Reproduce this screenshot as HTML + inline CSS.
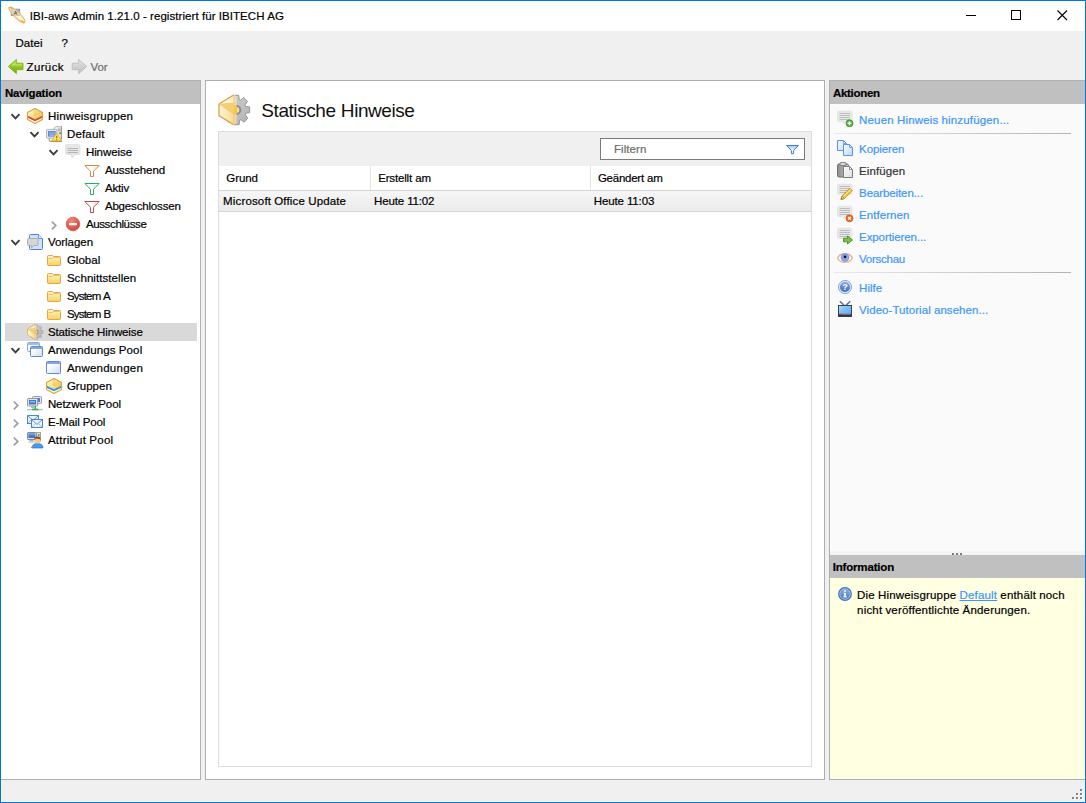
<!DOCTYPE html>
<html lang="de">
<head>
<meta charset="utf-8">
<title>IBI-aws Admin 1.21.0 - registriert für IBITECH AG</title>
<style>
*{box-sizing:border-box;margin:0;padding:0}
html,body{width:1086px;height:803px;overflow:hidden;background:#f0f0f0}
body{font-family:"Liberation Sans",sans-serif;font-size:12px;color:#000;position:relative}
.abs{position:absolute}
.b{position:absolute}
.t{position:absolute;white-space:nowrap;line-height:18px;height:18px;-webkit-text-stroke:.2px currentColor}
svg{overflow:visible}
</style>
</head>
<body>
<!-- window frame -->
<div class="b" style="left:0;top:0;width:1086px;height:803px;border:1px solid #0078d7"></div>
<div class="b" style="left:1px;top:31px;width:1084px;height:771px;border:1px solid #fcf6f0;border-top:none"></div>
<!-- title bar -->
<div class="b" style="left:1px;top:1px;width:1084px;height:30px;background:#fff"></div>
<svg class="abs" style="left:8px;top:7px" width="17" height="17" viewBox="0 0 17 17"><rect x="3.300" y="2.200" width="8.400" height="6.300" fill="#94b4d8" stroke="#8198b6" stroke-width=".9"/>
<ellipse cx="9" cy="7.900" rx="10.800" ry="2.900" transform="rotate(44 9 7.900)" fill="#fff4dc" fill-opacity=".5" stroke="#f0bb62" stroke-width="1.100"/>
<ellipse cx="9" cy="7.900" rx="9.600" ry="1.900" transform="rotate(44 9 7.900)" fill="none" stroke="#f6d8a0" stroke-width=".6"/>
<path d="M6.200 7.600 L7.600 4.100 L9 7.600 M6.800 6.400 H8.400" stroke="#8f7220" stroke-width="1" fill="none"/>
<path d="M1.300 .9 Q2.800 .1 4.300 1.300" stroke="#eeb04a" stroke-width="1.500" fill="none" stroke-linecap="round"/>
<path d="M13.500 13.700 Q15.200 15.600 16.400 15.400" stroke="#eeb04a" stroke-width="1.500" fill="none" stroke-linecap="round"/></svg>
<svg class="abs" style="left:948px;top:1px" width="137" height="30" viewBox="948 1 137 30">
  <path d="M966 15.500h10" stroke="#000" stroke-width="1" fill="none"/>
  <rect x="1011.500" y="10.500" width="9" height="9" stroke="#000" stroke-width="1" fill="none"/>
  <path d="M1057.500 10.500l9.500 9.500M1067 10.500l-9.500 9.500" stroke="#000" stroke-width="1.100" fill="none"/>
</svg>
<!-- toolbar icons -->
<svg class="abs" style="left:8px;top:59px" width="16" height="16" viewBox="0 0 16 16"><defs><linearGradient id="gbk" x1="0" y1="0" x2="0" y2="1"><stop offset="0" stop-color="#bfe23a"/><stop offset=".5" stop-color="#93c81e"/><stop offset="1" stop-color="#6aaa12"/></linearGradient></defs>
<path d="M.4 7.500 L8.400 .4 V4.200 H15 V10.700 H8.400 V14.700Z" fill="url(#gbk)" stroke="#7fb61e" stroke-width=".9" stroke-linejoin="round"/>
<path d="M2.300 7.300 L7.500 2.700 V5.200 H14 V6.500 H3.500Z" fill="#dff08a" opacity=".55"/></svg>
<svg class="abs" style="left:72px;top:59px" width="16" height="16" viewBox="0 0 16 16"><defs><linearGradient id="gfw" x1="0" y1="0" x2="0" y2="1"><stop offset="0" stop-color="#e6e6e6"/><stop offset="1" stop-color="#bdbdbd"/></linearGradient></defs>
<path d="M14.700 7.500 L6.700 .4 V4.200 H.2 V10.700 H6.700 V14.700Z" fill="url(#gfw)" stroke="#bcbcbc" stroke-width=".9" stroke-linejoin="round"/></svg>

<!-- navigation panel -->
<div class="b" style="left:1px;top:80px;width:200px;height:700px;background:#fff;border-right:1px solid #b0b0b0;border-bottom:1px solid #b0b0b0;border-top:1px solid #b0b0b0"></div>
<div class="b" style="left:1px;top:81px;width:199px;height:23px;background:#c0c0c0"></div>
<div class="b" style="left:5px;top:323px;width:192px;height:18px;background:#d9d9d9"></div>
<svg class="abs" style="left:10px;top:112px" width="12" height="9" viewBox="0 0 12 9"><path d="M1.5 2.200 L5.500 6.300 L9.500 2.200" fill="none" stroke="#3c3c3c" stroke-width="1.900"/></svg>
<svg class="abs" style="left:27px;top:108px" width="16" height="16" viewBox="0 0 16 16"><defs><linearGradient id="cte2574a" x1="0" y1="0" x2="1" y2=".6"><stop offset="0" stop-color="#fffef4"/><stop offset=".5" stop-color="#fbe7a4"/><stop offset="1" stop-color="#f3bd40"/></linearGradient>
<linearGradient id="cse2574a" x1="0" y1="0" x2="1" y2="0"><stop offset="0" stop-color="#fdf3c8"/><stop offset=".5" stop-color="#f8dc6a"/><stop offset="1" stop-color="#f4c84a"/></linearGradient></defs>
<path d="M8 .5 L15.500 4.500 V11.500 L8 15.500 L.5 11.500 V4.500Z" fill="#fdf7d2"/>
<path d="M8 .5 L15.500 4.500 L8 8.500 L.5 4.500Z" fill="url(#cte2574a)"/>
<path d="M.5 4.500 L8 8.500 L15.500 4.500 V7.600 L8 11 L.5 7.600Z" fill="url(#cse2574a)"/>
<path d="M.5 7.600 L8 11 L15.500 7.600 V9.600 L8 13 L.5 9.600Z" fill="#e2574a"/>
<path d="M.5 8.800 L8 12.200 L15.500 8.800 V9.600 L8 13 L.5 9.600Z" fill="#c53d33"/>
<path d="M8 .5 L15.500 4.500 V11.500 L8 15.500 L.5 11.500 V4.500Z" fill="none" stroke="#d9a538" stroke-width="1.100" stroke-linejoin="round"/>
<path d="M8 1 V8" stroke="#e0ab48" stroke-width=".7" fill="none" opacity=".8"/></svg>
<svg class="abs" style="left:29px;top:130px" width="12" height="9" viewBox="0 0 12 9"><path d="M1.5 2.200 L5.500 6.300 L9.500 2.200" fill="none" stroke="#3c3c3c" stroke-width="1.900"/></svg>
<svg class="abs" style="left:46px;top:126px" width="16" height="16" viewBox="0 0 16 16"><path d="M9.500 .6 H15.400 V13.200 H8 V2Z" fill="#ececec" stroke="#b4b4b4" stroke-width=".9"/>
<path d="M15.400 .6 V13.200 H11" fill="none" stroke="#8e8e8e" stroke-width=".9"/>
<rect x="11.800" y="2.700" width="2.400" height=".9" fill="#8c8c8c"/><rect x="11.800" y="4.400" width="2.400" height=".9" fill="#8c8c8c"/><circle cx="14" cy="7.300" r="1" fill="#3fa43a"/>
<rect x=".5" y="3.400" width="10.300" height="8.800" rx="1" fill="#e6e8ea" stroke="#a9adb2" stroke-width=".9"/>
<rect x="2" y="5" width="7.600" height="5.600" fill="#5585d2"/><rect x="2.800" y="5.800" width="6" height="3.600" fill="#7fa5e2"/><rect x="3.800" y="9" width="4" height=".8" fill="#a9c2ec"/>
<path d="M3.300 12.600 V14.500 Q3.300 15.300 4.500 15.300 H6" fill="none" stroke="#9aa0a6" stroke-width="1.200"/>
<path d="M10.700 6.900 L15.700 15.200 H5.500Z" fill="#fde468" stroke="#e6b23a" stroke-width=".9" stroke-linejoin="round"/>
<path d="M5.300 15.300 H15.900" stroke="#c8861e" stroke-width="1.100"/>
<rect x="10.200" y="9.800" width="1.100" height="2.600" fill="#a8660a"/><rect x="10.200" y="13.200" width="1.100" height="1.100" fill="#a8660a"/></svg>
<svg class="abs" style="left:48px;top:148px" width="12" height="9" viewBox="0 0 12 9"><path d="M1.5 2.200 L5.500 6.300 L9.500 2.200" fill="none" stroke="#3c3c3c" stroke-width="1.900"/></svg>
<svg class="abs" style="left:65px;top:144px" width="16" height="16" viewBox="0 0 16 16"><path d="M2 .5 H13.500 Q15 .5 15 2 V9 Q15 10.500 13.500 10.500 H10 L7.200 13.800 L6 10.500 H2 Q.5 10.500 .5 9 V2 Q.5 .5 2 .5Z" fill="#e7e7e7" stroke="#dcdcdc" stroke-width=".8"/>
<path d="M2.500 4.500 H13 M2.500 6.500 H13 M2.500 8.500 H13" stroke="#b4b4b4" stroke-width="1"/></svg>
<svg class="abs" style="left:84px;top:162px" width="16" height="16" viewBox="0 0 16 16"><path d="M.8 3.500 H15.200 L9.500 9.200 V14.500 H6.500 V9.200Z" fill="#fff" stroke="#cf8a45" stroke-width="1" stroke-linejoin="miter"/><path d="M10 5 L12.500 4.500 L9.500 7.500Z" fill="#cf8a45" opacity=".25"/></svg>
<svg class="abs" style="left:84px;top:180px" width="16" height="16" viewBox="0 0 16 16"><path d="M.8 3.500 H15.200 L9.500 9.200 V14.500 H6.500 V9.200Z" fill="#fff" stroke="#2fa869" stroke-width="1" stroke-linejoin="miter"/><path d="M10 5 L12.500 4.500 L9.500 7.500Z" fill="#2fa869" opacity=".25"/></svg>
<svg class="abs" style="left:84px;top:198px" width="16" height="16" viewBox="0 0 16 16"><path d="M.8 3.500 H15.200 L9.500 9.200 V14.500 H6.500 V9.200Z" fill="#fff" stroke="#c44848" stroke-width="1" stroke-linejoin="miter"/><path d="M10 5 L12.500 4.500 L9.500 7.500Z" fill="#c44848" opacity=".25"/></svg>
<svg class="abs" style="left:50px;top:219px" width="8" height="12" viewBox="0 0 8 12"><path d="M1.800 2.600 L5.800 6.450 L1.800 10.300" fill="none" stroke="#a0a0a0" stroke-width="1.700"/></svg>
<svg class="abs" style="left:65px;top:216px" width="16" height="16" viewBox="0 0 16 16"><defs><radialGradient id="gstop" cx=".4" cy=".3" r=".8"><stop offset="0" stop-color="#f28a7c"/><stop offset="1" stop-color="#cf3b30"/></radialGradient></defs>
<circle cx="8" cy="8" r="6.800" fill="url(#gstop)" stroke="#d9564a" stroke-width=".8"/><rect x="4" y="7" width="8" height="2.200" rx=".5" fill="#fff"/></svg>
<svg class="abs" style="left:10px;top:238px" width="12" height="9" viewBox="0 0 12 9"><path d="M1.5 2.200 L5.500 6.300 L9.500 2.200" fill="none" stroke="#3c3c3c" stroke-width="1.900"/></svg>
<svg class="abs" style="left:27px;top:234px" width="16" height="16" viewBox="0 0 16 16"><path d="M3.500 .5 H11.500 L15.500 4.500 V14.500 Q15.500 15.500 14.500 15.500 H3.500 Q2.500 15.500 2.500 14.500 V1.500 Q2.500 .5 3.500 .5Z" fill="#cfe0f8" stroke="#4a86e0"/>
<path d="M11.500 .5 V4.500 H15.500" fill="#eaf2fd" stroke="#4a86e0" stroke-width=".8"/>
<path d="M1.500 4.500 H10 Q11 4.500 11 5.500 V10.500 Q11 11.500 10 11.500 H6.500 L4.500 14 V11.500 H1.500 Q.5 11.500 .5 10.500 V5.500 Q.5 4.500 1.500 4.500Z" fill="#d6d6d6" stroke="#a9a9a9" stroke-width=".9"/></svg>
<svg class="abs" style="left:46px;top:252px" width="16" height="16" viewBox="0 0 16 16"><defs><linearGradient id="gfo" x1="0" y1="0" x2="0" y2="1"><stop offset="0" stop-color="#fef6cc"/><stop offset="1" stop-color="#f6d256"/></linearGradient></defs>
<path d="M1.500 4.500 Q1.500 3.500 2.500 3.500 H6.500 L7.500 4.500 H13.500 Q14.500 4.500 14.500 5.500 V12.500 Q14.500 13.500 13.500 13.500 H2.500 Q1.500 13.500 1.500 12.500Z" fill="url(#gfo)" stroke="#e0a648"/>
<path d="M2.500 6.500 H6.500 L7.500 5.500 H13.500" fill="none" stroke="#ecbc5c" stroke-width=".9"/></svg>
<svg class="abs" style="left:46px;top:270px" width="16" height="16" viewBox="0 0 16 16"><defs><linearGradient id="gfo" x1="0" y1="0" x2="0" y2="1"><stop offset="0" stop-color="#fef6cc"/><stop offset="1" stop-color="#f6d256"/></linearGradient></defs>
<path d="M1.500 4.500 Q1.500 3.500 2.500 3.500 H6.500 L7.500 4.500 H13.500 Q14.500 4.500 14.500 5.500 V12.500 Q14.500 13.500 13.500 13.500 H2.500 Q1.500 13.500 1.500 12.500Z" fill="url(#gfo)" stroke="#e0a648"/>
<path d="M2.500 6.500 H6.500 L7.500 5.500 H13.500" fill="none" stroke="#ecbc5c" stroke-width=".9"/></svg>
<svg class="abs" style="left:46px;top:288px" width="16" height="16" viewBox="0 0 16 16"><defs><linearGradient id="gfo" x1="0" y1="0" x2="0" y2="1"><stop offset="0" stop-color="#fef6cc"/><stop offset="1" stop-color="#f6d256"/></linearGradient></defs>
<path d="M1.500 4.500 Q1.500 3.500 2.500 3.500 H6.500 L7.500 4.500 H13.500 Q14.500 4.500 14.500 5.500 V12.500 Q14.500 13.500 13.500 13.500 H2.500 Q1.500 13.500 1.500 12.500Z" fill="url(#gfo)" stroke="#e0a648"/>
<path d="M2.500 6.500 H6.500 L7.500 5.500 H13.500" fill="none" stroke="#ecbc5c" stroke-width=".9"/></svg>
<svg class="abs" style="left:46px;top:306px" width="16" height="16" viewBox="0 0 16 16"><defs><linearGradient id="gfo" x1="0" y1="0" x2="0" y2="1"><stop offset="0" stop-color="#fef6cc"/><stop offset="1" stop-color="#f6d256"/></linearGradient></defs>
<path d="M1.500 4.500 Q1.500 3.500 2.500 3.500 H6.500 L7.500 4.500 H13.500 Q14.500 4.500 14.500 5.500 V12.500 Q14.500 13.500 13.500 13.500 H2.500 Q1.500 13.500 1.500 12.500Z" fill="url(#gfo)" stroke="#e0a648"/>
<path d="M2.500 6.500 H6.500 L7.500 5.500 H13.500" fill="none" stroke="#ecbc5c" stroke-width=".9"/></svg>
<svg class="abs" style="left:27px;top:324px" width="16" height="16" viewBox="0 0 16 16"><g transform="scale(.5)"><defs><linearGradient id="gsl2" x1="0" y1="0" x2="1" y2="0"><stop offset="0" stop-color="#fff6dc"/><stop offset="1" stop-color="#f8d88e"/></linearGradient>
<linearGradient id="gst2" x1="0" y1="1" x2="1" y2="0"><stop offset="0" stop-color="#fffef6"/><stop offset="1" stop-color="#f9e6b4"/></linearGradient>
<linearGradient id="ggr2" x1="0" y1="0" x2="1" y2="1"><stop offset="0" stop-color="#d2d2d2"/><stop offset="1" stop-color="#b2b2b2"/></linearGradient></defs>
<path d="M27.76 12.42 L31.60 12.89 L31.69 18.60 L27.86 19.22 L27.29 20.82 L29.71 24.15 L26.10 28.25 L22.99 25.71 L21.56 26.40 L21.13 30.63 L15.94 30.73 L15.38 26.52 L13.92 25.89 L10.89 28.55 L7.16 24.58 L9.47 21.16 L8.84 19.58 L5.00 19.11 L4.91 13.40 L8.74 12.78 L9.31 11.18 L6.89 7.85 L10.50 3.75 L13.61 6.29 L15.04 5.60 L15.47 1.37 L20.66 1.27 L21.22 5.48 L22.68 6.11 L25.71 3.45 L29.44 7.42 L27.13 10.84Z" fill="url(#ggr2)" stroke="#8e8e8e" stroke-width=".9" stroke-linejoin="round"/>
<circle cx="18.300" cy="16" r="5" fill="#8c8c8c"/><circle cx="18.300" cy="16" r="3" fill="#f1e2b0"/>
<path d="M16 .75 L18.600 2.500 V29.500 L16 31Z" fill="#fbe7b4" opacity=".7"/>
<path d="M16 12.500 H18.500 Q20.300 16 18.500 20 H16Z" fill="#fdc733"/>
<path d="M1 10 L16 .75 V9.200Z" fill="url(#gst2)"/>
<path d="M1 10 L16 9.200 V20Z" fill="#f5cf72"/>
<path d="M1 10 L16 20 V31 L1 21.700Z" fill="url(#gsl2)"/>
<path d="M16 .75 L1 10 V21.700 L16 31" fill="none" stroke="#dca548" stroke-width="1.400" stroke-linejoin="round"/>
<path d="M1 10 L16 9.200 M1 10 L16 20" stroke="#f2c466" stroke-width=".7" fill="none"/>
<path d="M16 .75 V31" stroke="#f4c66a" stroke-width="1"/></g></svg>
<svg class="abs" style="left:10px;top:346px" width="12" height="9" viewBox="0 0 12 9"><path d="M1.5 2.200 L5.500 6.300 L9.500 2.200" fill="none" stroke="#3c3c3c" stroke-width="1.900"/></svg>
<svg class="abs" style="left:27px;top:342px" width="16" height="16" viewBox="0 0 16 16"><g opacity=".75"><defs><linearGradient id="gwb" x1="0" y1="0" x2="1" y2="1"><stop offset=".25" stop-color="#ffffff"/><stop offset="1" stop-color="#cfdcf4"/></linearGradient></defs>
<rect x="0.5" y="0.5" width="12" height="9" rx="1" fill="url(#gwb)" stroke="#6288d0"/>
<rect x="1" y="1" width="11" height="2" fill="#86a8e2"/></g><defs><linearGradient id="gwc" x1="0" y1="0" x2="1" y2="1"><stop offset=".25" stop-color="#ffffff"/><stop offset="1" stop-color="#cfdcf4"/></linearGradient></defs>
<rect x="3.5" y="4.5" width="12" height="10" rx="1" fill="url(#gwc)" stroke="#6288d0"/>
<rect x="4" y="5" width="11" height="2" fill="#86a8e2"/></svg>
<svg class="abs" style="left:46px;top:360px" width="16" height="16" viewBox="0 0 16 16"><defs><linearGradient id="gwa" x1="0" y1="0" x2="1" y2="1"><stop offset=".25" stop-color="#ffffff"/><stop offset="1" stop-color="#cfdcf4"/></linearGradient></defs>
<rect x="0.5" y="1.5" width="14" height="12" rx="1" fill="url(#gwa)" stroke="#6288d0"/>
<rect x="1" y="2" width="13" height="2" fill="#86a8e2"/></svg>
<svg class="abs" style="left:46px;top:378px" width="16" height="16" viewBox="0 0 16 16"><defs><linearGradient id="ct4aa0e6" x1="0" y1="0" x2="1" y2=".6"><stop offset="0" stop-color="#fffef4"/><stop offset=".5" stop-color="#fbe7a4"/><stop offset="1" stop-color="#f3bd40"/></linearGradient>
<linearGradient id="cs4aa0e6" x1="0" y1="0" x2="1" y2="0"><stop offset="0" stop-color="#fdf3c8"/><stop offset=".5" stop-color="#f8dc6a"/><stop offset="1" stop-color="#f4c84a"/></linearGradient></defs>
<path d="M8 .5 L15.500 4.500 V11.500 L8 15.500 L.5 11.500 V4.500Z" fill="#fdf7d2"/>
<path d="M8 .5 L15.500 4.500 L8 8.500 L.5 4.500Z" fill="url(#ct4aa0e6)"/>
<path d="M.5 4.500 L8 8.500 L15.500 4.500 V7.600 L8 11 L.5 7.600Z" fill="url(#cs4aa0e6)"/>
<path d="M.5 7.600 L8 11 L15.500 7.600 V9.600 L8 13 L.5 9.600Z" fill="#4aa0e6"/>
<path d="M.5 8.800 L8 12.200 L15.500 8.800 V9.600 L8 13 L.5 9.600Z" fill="#2f7fc8"/>
<path d="M8 .5 L15.500 4.500 V11.500 L8 15.500 L.5 11.500 V4.500Z" fill="none" stroke="#d9a538" stroke-width="1.100" stroke-linejoin="round"/>
<path d="M8 1 V8" stroke="#e0ab48" stroke-width=".7" fill="none" opacity=".8"/></svg>
<svg class="abs" style="left:12px;top:399px" width="8" height="12" viewBox="0 0 8 12"><path d="M1.800 2.600 L5.800 6.450 L1.800 10.300" fill="none" stroke="#a0a0a0" stroke-width="1.700"/></svg>
<svg class="abs" style="left:27px;top:396px" width="16" height="16" viewBox="0 0 16 16"><rect x="5.500" y=".5" width="9" height="7" rx=".8" fill="#e3e6ea" stroke="#9aa1a8"/><rect x="7" y="2" width="6" height="4" fill="#4a7fd0"/>
<rect x=".5" y="2.500" width="10" height="7.500" rx=".8" fill="#e3e6ea" stroke="#8f979f"/><rect x="2" y="4" width="7" height="4.500" fill="#3f78cf"/><rect x="3" y="5" width="5" height="1.500" fill="#8fb4ec"/>
<rect x="4" y="10.500" width="3" height="1.500" fill="#a9afb5"/>
<rect x="7.500" y="10" width="1.500" height="3" fill="#3fae6a"/><rect x="0" y="13" width="16" height="1.300" fill="#b9c2c8"/><rect x="5" y="12.600" width="6.500" height="1.700" fill="#3fae6a"/></svg>
<svg class="abs" style="left:12px;top:417px" width="8" height="12" viewBox="0 0 8 12"><path d="M1.800 2.600 L5.800 6.450 L1.800 10.300" fill="none" stroke="#a0a0a0" stroke-width="1.700"/></svg>
<svg class="abs" style="left:27px;top:414px" width="16" height="16" viewBox="0 0 16 16"><rect x="0.5" y="1.5" width="11" height="8" fill="#eef4fd" stroke="#4a86dc"/>
<path d="M1 2 L6.0 6.3999999999999995 L11 2" fill="none" stroke="#4a86dc" stroke-width=".9"/>
<path d="M1 9 L4.5600000000000005 5.5 M11 9 L7.4399999999999995 5.5" fill="none" stroke="#8fb4ec" stroke-width=".8"/><rect x="4.5" y="5.5" width="11" height="8" fill="#eef4fd" stroke="#4a86dc"/>
<path d="M5 6 L10.0 10.399999999999999 L15 6" fill="none" stroke="#4a86dc" stroke-width=".9"/>
<path d="M5 13 L8.56 9.5 M15 13 L11.44 9.5" fill="none" stroke="#8fb4ec" stroke-width=".8"/></svg>
<svg class="abs" style="left:12px;top:435px" width="8" height="12" viewBox="0 0 8 12"><path d="M1.800 2.600 L5.800 6.450 L1.800 10.300" fill="none" stroke="#a0a0a0" stroke-width="1.700"/></svg>
<svg class="abs" style="left:27px;top:432px" width="16" height="16" viewBox="0 0 16 16"><rect x="9.500" y=".5" width="4" height="9" fill="#e4e4e4" stroke="#a2a2a2"/><rect x="11" y="2" width="1.500" height="2.500" fill="#3fae4a"/>
<rect x=".5" y=".5" width="8.500" height="7" rx=".6" fill="#dfe3e8" stroke="#7f8a96"/><rect x="1.500" y="1.500" width="6.500" height="4.500" fill="#3d74c8"/><rect x="1.500" y="1.500" width="6.500" height="1.800" fill="#6e9be0"/>
<rect x="2.500" y="8" width="4" height="1.500" fill="#a8aeb4"/><rect x="1.500" y="9.500" width="6" height="1.200" fill="#c3c7cb"/>
<path d="M5 16 Q5 11.500 10.500 11.500 Q16 11.500 16 16Z" fill="#3f9cf0" stroke="#2a78d0" stroke-width=".7"/>
<circle cx="10.500" cy="8.300" r="3.300" fill="#f6c89a"/><path d="M7.100 8 Q7.300 4.600 10.500 4.600 Q13.700 4.600 13.900 8 Q12 6.500 10.500 6.800 Q9 6.500 7.100 8Z" fill="#9a4a1a"/>
<rect x="4" y="14.800" width="1.500" height="1.200" fill="#e08a2a"/></svg>

<!-- center panel -->
<div class="b" style="left:205px;top:80px;width:620px;height:700px;background:#fff;border:1px solid #adadad"></div>
<svg class="abs" style="left:218px;top:94px" width="32" height="32" viewBox="0 0 32 32"><defs><linearGradient id="gsl" x1="0" y1="0" x2="1" y2="0"><stop offset="0" stop-color="#fff6dc"/><stop offset="1" stop-color="#f8d88e"/></linearGradient>
<linearGradient id="gst" x1="0" y1="1" x2="1" y2="0"><stop offset="0" stop-color="#fffef6"/><stop offset="1" stop-color="#f9e6b4"/></linearGradient>
<linearGradient id="ggr" x1="0" y1="0" x2="1" y2="1"><stop offset="0" stop-color="#d2d2d2"/><stop offset="1" stop-color="#b2b2b2"/></linearGradient></defs>
<path d="M27.76 12.42 L31.60 12.89 L31.69 18.60 L27.86 19.22 L27.29 20.82 L29.71 24.15 L26.10 28.25 L22.99 25.71 L21.56 26.40 L21.13 30.63 L15.94 30.73 L15.38 26.52 L13.92 25.89 L10.89 28.55 L7.16 24.58 L9.47 21.16 L8.84 19.58 L5.00 19.11 L4.91 13.40 L8.74 12.78 L9.31 11.18 L6.89 7.85 L10.50 3.75 L13.61 6.29 L15.04 5.60 L15.47 1.37 L20.66 1.27 L21.22 5.48 L22.68 6.11 L25.71 3.45 L29.44 7.42 L27.13 10.84Z" fill="url(#ggr)" stroke="#8e8e8e" stroke-width=".9" stroke-linejoin="round"/>
<circle cx="18.300" cy="16" r="5" fill="#8c8c8c"/><circle cx="18.300" cy="16" r="3" fill="#f1e2b0"/>
<path d="M16 .75 L18.600 2.500 V29.500 L16 31Z" fill="#fbe7b4" opacity=".7"/>
<path d="M16 12.500 H18.500 Q20.300 16 18.500 20 H16Z" fill="#fdc733"/>
<path d="M1 10 L16 .75 V9.200Z" fill="url(#gst)"/>
<path d="M1 10 L16 9.200 V20Z" fill="#f5cf72"/>
<path d="M1 10 L16 20 V31 L1 21.700Z" fill="url(#gsl)"/>
<path d="M16 .75 L1 10 V21.700 L16 31" fill="none" stroke="#dca548" stroke-width="1.400" stroke-linejoin="round"/>
<path d="M1 10 L16 9.200 M1 10 L16 20" stroke="#f2c466" stroke-width=".7" fill="none"/>
<path d="M16 .75 V31" stroke="#f4c66a" stroke-width="1"/></svg>
<div class="b" style="left:218px;top:131px;width:594px;height:636px;border:1px solid #dddddd;background:#fff"></div>
<div class="b" style="left:219px;top:132px;width:592px;height:34px;background:#f0f0f0"></div>
<div class="b" style="left:600px;top:138px;width:205px;height:22px;background:#fff;border:1px solid #7a7a7a"></div>
<svg class="abs" style="left:786px;top:145px" width="13" height="10" viewBox="0 0 13 10"><defs><linearGradient id="gfb" x1="0" y1="0" x2="0" y2="1"><stop offset="0" stop-color="#9fc3f0"/><stop offset=".6" stop-color="#ffffff"/></linearGradient></defs>
<path d="M.5 .5 H12.500 L7.600 5.400 V8.700 H5.400 V5.400Z" fill="url(#gfb)" stroke="#3f7fd8" stroke-width="1" stroke-linejoin="round"/></svg>
<div class="b" style="left:370px;top:166px;width:1px;height:24px;background:#e4e4e4"></div>
<div class="b" style="left:590px;top:166px;width:1px;height:24px;background:#e4e4e4"></div>
<div class="b" style="left:219px;top:190px;width:592px;height:22px;background:linear-gradient(#f6f6f6,#ebebeb);border-top:1px solid #d4d4d4;border-bottom:1px solid #d4d4d4"></div>

<!-- right panel -->
<div class="b" style="left:829px;top:80px;width:256px;height:700px;background:#fafafa;border-left:1px solid #adadad;border-bottom:1px solid #adadad;border-top:1px solid #b0b0b0"></div>
<div class="b" style="left:830px;top:81px;width:255px;height:23px;background:#c0c0c0"></div>
<div class="b" style="left:834px;top:133px;width:237px;height:1px;background:linear-gradient(to right,#eaeaea,#b2b2b2)"></div>
<div class="b" style="left:834px;top:272px;width:237px;height:1px;background:linear-gradient(to right,#eaeaea,#b2b2b2)"></div>
<div class="b" style="left:830px;top:104px;width:1px;height:447px;background:#fff"></div>
<svg class="abs" style="left:837px;top:111px" width="16" height="16" viewBox="0 0 16 16"><path d="M2 .3 H13.500 Q15 .3 15 1.800 V9 Q15 10.500 13.500 10.500 H9 L6.500 13 V10.500 H2 Q.5 10.500 .5 9 V1.800 Q.5 .3 2 .3Z" fill="#e9e9e9" stroke="#dfdfdf" stroke-width=".8"/>
<path d="M2.500 2.500 H13 M2.500 4.500 H13 M2.500 6.500 H13 M2.500 8.500 H13" stroke="#b8b8b8" stroke-width=".9"/><circle cx="12.500" cy="12.300" r="3.500" fill="#4fae3a" stroke="#2f8a22" stroke-width=".7"/><path d="M10.500 12.300 H14.500 M12.500 10.300 V14.300" stroke="#fff" stroke-width="1.400"/></svg>
<svg class="abs" style="left:837px;top:140px" width="16" height="16" viewBox="0 0 16 16"><defs><linearGradient id="gp1" x1="0" y1="0" x2="1" y2="1"><stop offset="0" stop-color="#f2f7fe"/><stop offset="1" stop-color="#cfe0fa"/></linearGradient></defs>
<path d="M0.5 0.5 H6.5 L9.5 3.5 V10.5 H0.5Z" fill="url(#gp1)" stroke="#5a94e8" stroke-linejoin="round"/>
<path d="M6.5 0.5 V3.5 H9.5" fill="none" stroke="#5a94e8" stroke-width=".8"/><defs><linearGradient id="gp2" x1="0" y1="0" x2="1" y2="1"><stop offset="0" stop-color="#f6faff"/><stop offset="1" stop-color="#c2d8f8"/></linearGradient></defs>
<path d="M6.5 4.5 H12.5 L15.5 7.5 V15.5 H6.5Z" fill="url(#gp2)" stroke="#5a94e8" stroke-linejoin="round"/>
<path d="M12.5 4.5 V7.5 H15.5" fill="none" stroke="#5a94e8" stroke-width=".8"/></svg>
<svg class="abs" style="left:837px;top:162px" width="16" height="16" viewBox="0 0 16 16"><defs><linearGradient id="gcb" x1="0" y1="0" x2="1" y2="0"><stop offset="0" stop-color="#8c8c8c"/><stop offset="1" stop-color="#c9c9c9"/></linearGradient></defs>
<rect x=".5" y="2" width="11" height="13" rx="1.500" fill="url(#gcb)" stroke="#6f6f6f"/><rect x="3" y=".5" width="6" height="3" rx="1" fill="#d5d5d5" stroke="#6f6f6f" stroke-width=".8"/><defs><linearGradient id="gp3" x1="0" y1="0" x2="1" y2="1"><stop offset="0" stop-color="#ffffff"/><stop offset="1" stop-color="#dcdcdc"/></linearGradient></defs>
<path d="M6.5 4.5 H12.5 L15.5 7.5 V15.5 H6.5Z" fill="url(#gp3)" stroke="#7d7d7d" stroke-linejoin="round"/>
<path d="M12.5 4.5 V7.5 H15.5" fill="none" stroke="#7d7d7d" stroke-width=".8"/></svg>
<svg class="abs" style="left:837px;top:184px" width="16" height="16" viewBox="0 0 16 16"><path d="M2 .3 H13.500 Q15 .3 15 1.800 V9 Q15 10.500 13.500 10.500 H9 L6.500 13 V10.500 H2 Q.5 10.500 .5 9 V1.800 Q.5 .3 2 .3Z" fill="#e9e9e9" stroke="#dfdfdf" stroke-width=".8"/>
<path d="M2.500 2.500 H13 M2.500 4.500 H13 M2.500 6.500 H13 M2.500 8.500 H13" stroke="#b8b8b8" stroke-width=".9"/><path d="M12.800 4.200 L15.300 6.700 L7.500 14.500 L4 15.500 L5 12Z" fill="#f6c844" stroke="#c98a1a" stroke-width=".8" stroke-linejoin="round"/><path d="M5 12 L7.500 14.500 L4 15.500Z" fill="#f3d9b0" stroke="#a8641a" stroke-width=".6"/><path d="M4 15.500 L4.400 14.200 L5.300 15.100Z" fill="#5a3a10"/><path d="M6.500 12.500 L13.500 5.500" stroke="#fbe38a" stroke-width="1"/></svg>
<svg class="abs" style="left:837px;top:206px" width="16" height="16" viewBox="0 0 16 16"><path d="M2 .3 H13.500 Q15 .3 15 1.800 V9 Q15 10.500 13.500 10.500 H9 L6.500 13 V10.500 H2 Q.5 10.500 .5 9 V1.800 Q.5 .3 2 .3Z" fill="#e9e9e9" stroke="#dfdfdf" stroke-width=".8"/>
<path d="M2.500 2.500 H13 M2.500 4.500 H13 M2.500 6.500 H13 M2.500 8.500 H13" stroke="#b8b8b8" stroke-width=".9"/><circle cx="12.500" cy="12.300" r="3.500" fill="#ee6a24" stroke="#cf4f10" stroke-width=".7"/><path d="M11.100 10.900 L13.900 13.700 M13.900 10.900 L11.100 13.700" stroke="#fff" stroke-width="1.200"/></svg>
<svg class="abs" style="left:837px;top:228px" width="16" height="16" viewBox="0 0 16 16"><path d="M2 .3 H13.500 Q15 .3 15 1.800 V9 Q15 10.500 13.500 10.500 H9 L6.500 13 V10.500 H2 Q.5 10.500 .5 9 V1.800 Q.5 .3 2 .3Z" fill="#e9e9e9" stroke="#dfdfdf" stroke-width=".8"/>
<path d="M2.500 2.500 H13 M2.500 4.500 H13 M2.500 6.500 H13 M2.500 8.500 H13" stroke="#b8b8b8" stroke-width=".9"/><path d="M6.500 10.200 H10.500 V8 L15.500 12 L10.500 16 V13.800 H6.500Z" fill="#7cc24a" stroke="#3f8f1f" stroke-width=".9" stroke-linejoin="round"/></svg>
<svg class="abs" style="left:837px;top:250px" width="16" height="16" viewBox="0 0 16 16"><path d="M.7 8 C3 2.200 13 2.200 15.300 8 C13 13.800 3 13.800 .7 8Z" fill="#fff" stroke="#e9b492" stroke-width="1.500"/>
<circle cx="8" cy="7.500" r="4.300" fill="#7896e4"/><circle cx="8" cy="7.500" r="3" fill="#93acee"/><circle cx="8" cy="6.900" r="1.400" fill="#0c0c14"/></svg>
<svg class="abs" style="left:837px;top:279px" width="16" height="16" viewBox="0 0 16 16"><defs><linearGradient id="ghp" x1="0" y1="0" x2="0" y2="1"><stop offset="0" stop-color="#86a8da"/><stop offset="1" stop-color="#3f6db2"/></linearGradient></defs>
<circle cx="8" cy="8" r="6.600" fill="#dbe7f8" stroke="#7aa0dc" stroke-width=".9"/><circle cx="8" cy="8" r="5.100" fill="url(#ghp)"/>
<text x="8" y="11.300" font-family="Liberation Sans, sans-serif" font-size="9" font-weight="bold" fill="#fff" text-anchor="middle">?</text></svg>
<svg class="abs" style="left:837px;top:301px" width="16" height="16" viewBox="0 0 16 16"><path d="M2.800 .3 L7.300 4.500 M13.300 .3 L8.800 4.500" fill="none" stroke="#5d6d84" stroke-width="1.500"/>
<defs><linearGradient id="gtv" x1="0" y1="0" x2="1" y2="1"><stop offset="0" stop-color="#b4dafc"/><stop offset=".45" stop-color="#79bdf7"/><stop offset="1" stop-color="#5aaaf0"/></linearGradient></defs>
<rect x="1.500" y="4.500" width="13" height="11" fill="url(#gtv)" stroke="#3d434b" stroke-width="1"/>
<rect x="2" y="12.800" width="12" height="2.200" fill="#55595f"/><rect x="2" y="14" width="12" height="1.200" fill="#2e3237"/><rect x="4" y="12.800" width="1.600" height="1.200" fill="#f03030"/><path d="M6.500 13.400 H13" stroke="#9a9ea4" stroke-width=".9" stroke-dasharray="1 1"/></svg>
<!-- splitter -->
<div class="b" style="left:830px;top:551px;width:255px;height:4px;background:#f4f4f4"></div>
<div class="b" style="left:952px;top:553px;width:2px;height:2px;background:#7c7c7c;box-shadow:4px 0 0 #7c7c7c,8px 0 0 #7c7c7c"></div>
<!-- information -->
<div class="b" style="left:830px;top:555px;width:255px;height:23px;background:#c0c0c0"></div>
<div class="b" style="left:830px;top:578px;width:255px;height:201px;background:#ffffe1"></div>
<svg class="abs" style="left:838px;top:587px" width="14" height="14" viewBox="0 0 14 14"><defs><linearGradient id="gin" x1="0" y1="0" x2="0" y2="1"><stop offset="0" stop-color="#86aade"/><stop offset="1" stop-color="#4d7cc0"/></linearGradient></defs>
<circle cx="7" cy="7" r="6.300" fill="#a8c3ea" stroke="#3f73c6" stroke-width="1.200"/><circle cx="7" cy="7" r="4.800" fill="url(#gin)"/>
<rect x="6.200" y="6" width="1.700" height="3.800" fill="#fff"/><rect x="5.300" y="9.300" width="3.500" height="1.100" fill="#fff"/><rect x="5.600" y="5.700" width="1.500" height=".9" fill="#fff"/><rect x="6.100" y="3.300" width="1.800" height="1.600" rx=".4" fill="#fff"/></svg>

<!-- status bar grip -->
<div class="b" style="left:1072px;top:797px;width:2px;height:2px;background:#848484;box-shadow:1px 1px 0 #fff,
 4px 0 0 #848484,5px 1px 0 #fff, 8px 0 0 #848484,9px 1px 0 #fff,
 4px -4px 0 #848484,5px -3px 0 #fff, 8px -4px 0 #848484,9px -3px 0 #fff,
 8px -8px 0 #848484,9px -7px 0 #fff"></div>

<!-- text -->
<div class="t" style="left:29.8px;top:6.5px;height:18px;line-height:18px;font-size:11.5px;letter-spacing:0.070px;color:#000;word-spacing:-0.070px;">IBI-aws Admin 1.21.0 - registriert für IBITECH AG</div>
<div class="t" style="left:15.5px;top:34.0px;height:18px;line-height:18px;font-size:11.5px;letter-spacing:0.038px;color:#000;">Datei</div>
<div class="t" style="left:61.5px;top:34.0px;height:18px;line-height:18px;font-size:11.5px;letter-spacing:0.000px;color:#000;">?</div>
<div class="t" style="left:26.5px;top:58.0px;height:18px;line-height:18px;font-size:11.5px;letter-spacing:0.371px;color:#000;">Zurück</div>
<div class="t" style="left:90.5px;top:58.0px;height:18px;line-height:18px;font-size:11.5px;letter-spacing:-0.131px;color:#6d6d6d;">Vor</div>
<div class="t" style="left:5.0px;top:84.0px;height:18px;line-height:18px;font-size:11.5px;letter-spacing:-0.187px;color:#000;font-weight:bold;">Navigation</div>
<div class="t" style="left:833.0px;top:84.0px;height:18px;line-height:18px;font-size:11.5px;letter-spacing:-0.314px;color:#000;font-weight:bold;">Aktionen</div>
<div class="t" style="left:832.7px;top:558.0px;height:18px;line-height:18px;font-size:11.5px;letter-spacing:-0.174px;color:#000;font-weight:bold;">Information</div>
<div class="t" style="left:47.9px;top:107.0px;height:18px;line-height:18px;font-size:11.5px;letter-spacing:0.203px;color:#000;">Hinweisgruppen</div>
<div class="t" style="left:66.9px;top:125.0px;height:18px;line-height:18px;font-size:11.5px;letter-spacing:0.194px;color:#000;">Default</div>
<div class="t" style="left:85.9px;top:143.0px;height:18px;line-height:18px;font-size:11.5px;letter-spacing:-0.065px;color:#000;">Hinweise</div>
<div class="t" style="left:104.9px;top:161.0px;height:18px;line-height:18px;font-size:11.5px;letter-spacing:-0.049px;color:#000;">Ausstehend</div>
<div class="t" style="left:104.9px;top:179.0px;height:18px;line-height:18px;font-size:11.5px;letter-spacing:-0.130px;color:#000;">Aktiv</div>
<div class="t" style="left:104.9px;top:197.0px;height:18px;line-height:18px;font-size:11.5px;letter-spacing:-0.166px;color:#000;">Abgeschlossen</div>
<div class="t" style="left:85.9px;top:215.0px;height:18px;line-height:18px;font-size:11.5px;letter-spacing:-0.366px;color:#000;">Ausschlüsse</div>
<div class="t" style="left:47.9px;top:233.0px;height:18px;line-height:18px;font-size:11.5px;letter-spacing:-0.028px;color:#000;">Vorlagen</div>
<div class="t" style="left:66.9px;top:251.0px;height:18px;line-height:18px;font-size:11.5px;letter-spacing:0.012px;color:#000;">Global</div>
<div class="t" style="left:66.9px;top:269.0px;height:18px;line-height:18px;font-size:11.5px;letter-spacing:0.062px;color:#000;">Schnittstellen</div>
<div class="t" style="left:66.9px;top:287.0px;height:18px;line-height:18px;font-size:11.5px;letter-spacing:-0.801px;color:#000;word-spacing:0.801px;">System A</div>
<div class="t" style="left:66.9px;top:305.0px;height:18px;line-height:18px;font-size:11.5px;letter-spacing:-0.801px;color:#000;word-spacing:0.801px;">System B</div>
<div class="t" style="left:47.9px;top:323.0px;height:18px;line-height:18px;font-size:11.5px;letter-spacing:-0.141px;color:#000;word-spacing:0.141px;">Statische Hinweise</div>
<div class="t" style="left:47.9px;top:341.0px;height:18px;line-height:18px;font-size:11.5px;letter-spacing:0.122px;color:#000;word-spacing:-0.122px;">Anwendungs Pool</div>
<div class="t" style="left:66.9px;top:359.0px;height:18px;line-height:18px;font-size:11.5px;letter-spacing:0.236px;color:#000;">Anwendungen</div>
<div class="t" style="left:66.9px;top:377.0px;height:18px;line-height:18px;font-size:11.5px;letter-spacing:0.024px;color:#000;">Gruppen</div>
<div class="t" style="left:47.9px;top:395.0px;height:18px;line-height:18px;font-size:11.5px;letter-spacing:-0.094px;color:#000;word-spacing:0.094px;">Netzwerk Pool</div>
<div class="t" style="left:47.9px;top:413.0px;height:18px;line-height:18px;font-size:11.5px;letter-spacing:-0.144px;color:#000;word-spacing:0.144px;">E-Mail Pool</div>
<div class="t" style="left:47.9px;top:431.0px;height:18px;line-height:18px;font-size:11.5px;letter-spacing:0.232px;color:#000;word-spacing:-0.232px;">Attribut Pool</div>
<div class="t" style="left:261.3px;top:95.5px;height:30px;line-height:30px;font-size:19px;letter-spacing:-0.432px;color:#111;word-spacing:0.432px;-webkit-text-stroke:0;">Statische Hinweise</div>
<div class="t" style="left:614.0px;top:140.0px;height:18px;line-height:18px;font-size:11.5px;letter-spacing:0.058px;color:#6d6d6d;">Filtern</div>
<div class="t" style="left:226.3px;top:169.0px;height:18px;line-height:18px;font-size:11.5px;letter-spacing:-0.090px;color:#000;">Grund</div>
<div class="t" style="left:378.2px;top:169.0px;height:18px;line-height:18px;font-size:11.5px;letter-spacing:-0.168px;color:#000;word-spacing:0.168px;">Erstellt am</div>
<div class="t" style="left:597.9px;top:169.0px;height:18px;line-height:18px;font-size:11.5px;letter-spacing:-0.247px;color:#000;word-spacing:0.247px;">Geändert am</div>
<div class="t" style="left:223.1px;top:192.0px;height:18px;line-height:18px;font-size:11.5px;letter-spacing:0.148px;color:#000;word-spacing:-0.148px;">Microsoft Office Update</div>
<div class="t" style="left:374.0px;top:192.0px;height:18px;line-height:18px;font-size:11.5px;letter-spacing:-0.145px;color:#000;word-spacing:0.145px;">Heute 11:02</div>
<div class="t" style="left:593.8px;top:192.0px;height:18px;line-height:18px;font-size:11.5px;letter-spacing:-0.145px;color:#000;word-spacing:0.145px;">Heute 11:03</div>
<div class="t" style="left:859.1px;top:111.0px;height:18px;line-height:18px;font-size:11.5px;letter-spacing:0.159px;color:#3c96fc;word-spacing:-0.159px;">Neuen Hinweis hinzufügen...</div>
<div class="t" style="left:859.1px;top:140.0px;height:18px;line-height:18px;font-size:11.5px;letter-spacing:-0.091px;color:#3c96fc;">Kopieren</div>
<div class="t" style="left:859.1px;top:162.0px;height:18px;line-height:18px;font-size:11.5px;letter-spacing:0.100px;color:#333;">Einfügen</div>
<div class="t" style="left:859.1px;top:184.0px;height:18px;line-height:18px;font-size:11.5px;letter-spacing:-0.101px;color:#3c96fc;">Bearbeiten...</div>
<div class="t" style="left:859.1px;top:206.0px;height:18px;line-height:18px;font-size:11.5px;letter-spacing:0.041px;color:#3c96fc;">Entfernen</div>
<div class="t" style="left:859.1px;top:228.0px;height:18px;line-height:18px;font-size:11.5px;letter-spacing:-0.100px;color:#3c96fc;">Exportieren...</div>
<div class="t" style="left:859.1px;top:250.0px;height:18px;line-height:18px;font-size:11.5px;letter-spacing:-0.264px;color:#3c96fc;">Vorschau</div>
<div class="t" style="left:859.1px;top:279.0px;height:18px;line-height:18px;font-size:11.5px;letter-spacing:0.024px;color:#3c96fc;">Hilfe</div>
<div class="t" style="left:859.1px;top:301.0px;height:18px;line-height:18px;font-size:11.5px;letter-spacing:0.050px;color:#3c96fc;word-spacing:-0.050px;">Video-Tutorial ansehen...</div>
<div class="t" style="left:857.1px;top:601.0px;height:18px;line-height:18px;font-size:11.5px;letter-spacing:0.172px;color:#000;word-spacing:-0.172px;">nicht veröffentlichte Änderungen.</div>
<div class="t" style="left:857.1px;top:586px;height:18px;line-height:18px;font-size:11.5px;letter-spacing:0.169px;word-spacing:-0.169px">Die Hinweisgruppe <a style="color:#3c96fc;text-decoration:underline">Default</a> enthält noch</div>
</body>
</html>
